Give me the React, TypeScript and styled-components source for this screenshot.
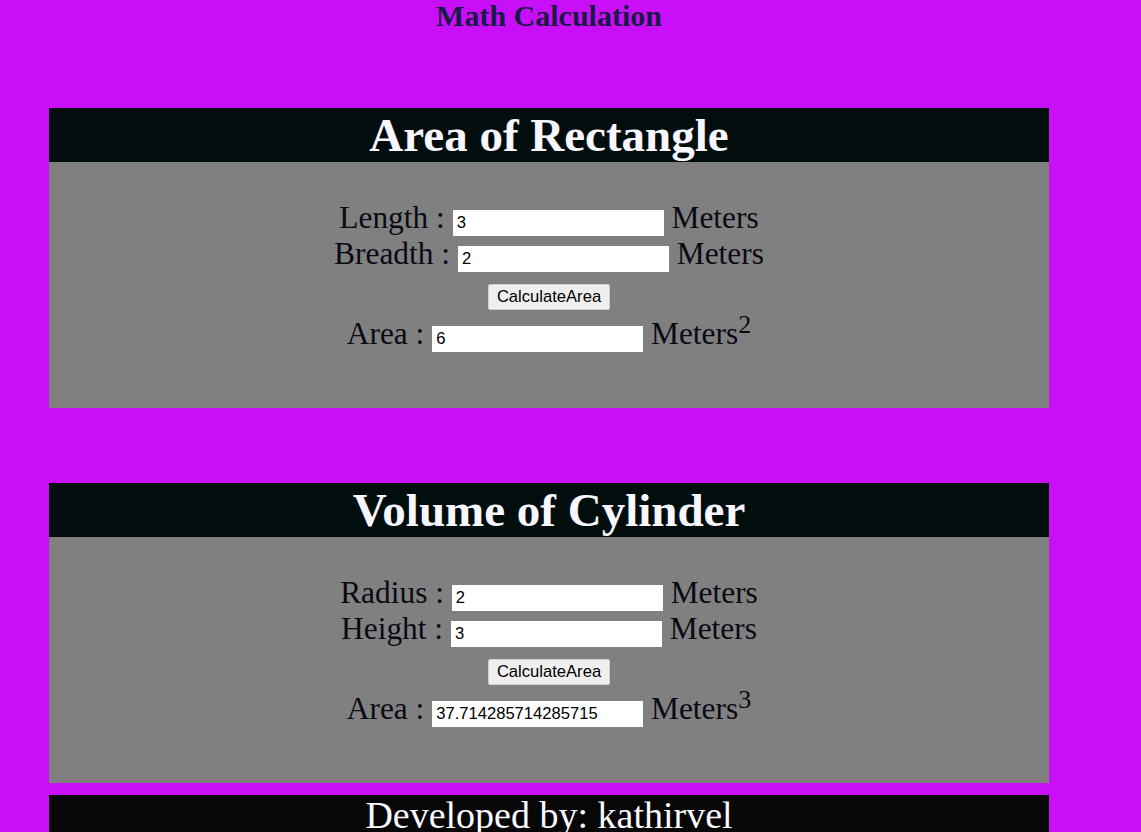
import React, { useState } from "react";
import styled, { createGlobalStyle } from "styled-components";

const GlobalStyle = createGlobalStyle`
  html, body {
    margin: 0;
    padding: 0;
    background: #c90ff8;
    font-family: "Liberation Serif", "Times New Roman", serif;
  }
`;

const Page = styled.div`
  display: flex;
  flex-direction: column;
  width: 1000px;
  padding-left: 49px;
`;

const Title = styled.div`
  font-family: "Liberation Serif", "Times New Roman", serif;
  font-weight: bold;
  font-size: 30px;
  line-height: 32px;
  height: 32px;
  text-align: center;
  color: #1a1a48;
`;

const Panel = styled.section<{ $top: number }>`
  display: flex;
  flex-direction: column;
  margin-top: ${(p) => p.$top}px;
`;

const PanelHeader = styled.div`
  height: 54px;
  background: #020e0e;
  color: #f8f6ff;
  font-weight: bold;
  font-size: 47px;
  line-height: 54px;
  text-align: center;
`;

const PanelBody = styled.div`
  box-sizing: border-box;
  height: 246px;
  padding-top: 38px;
  background: #808080;
  color: #0a0a14;
  font-size: 31.4px;
`;

const Row = styled.div`
  height: 36px;
  line-height: 36px;
  text-align: center;
  white-space: nowrap;
`;

const ButtonRow = styled.div`
  box-sizing: border-box;
  height: 44px;
  padding-top: 12px;
  display: flex;
  justify-content: center;
  align-items: flex-start;
`;

const Field = styled.input`
  box-sizing: border-box;
  width: 211px;
  height: 26px;
  border: none;
  padding: 0 4px;
  margin: 0;
  background: #ffffff;
  color: #000;
  font-family: "Liberation Sans", Arial, sans-serif;
  font-size: 16.6px;
  outline: none;
`;

const CalcButton = styled.button`
  box-sizing: border-box;
  width: 122px;
  height: 26px;
  padding: 0 6px;
  background: #efefef;
  border: 1px solid #cfcfcf;
  border-radius: 2px;
  color: #000;
  font-family: "Liberation Sans", Arial, sans-serif;
  font-size: 16.6px;
  cursor: pointer;
`;

const Sup = styled.sup`
  font-size: 0.83em;
  line-height: 0;
`;

const Footer = styled.footer`
  margin-top: 12px;
  background: #070707;
  color: #fafaff;
  font-size: 38px;
  line-height: 40px;
  padding-bottom: 10px;
  text-align: center;
`;

export default function App() {
  const [length, setLength] = useState("3");
  const [breadth, setBreadth] = useState("2");
  const [area, setArea] = useState("6");
  const [radius, setRadius] = useState("2");
  const [height, setHeight] = useState("3");
  const [volume, setVolume] = useState("37.714285714285715");

  return (
    <>
      <GlobalStyle />
      <Page>
        <Title>Math Calculation</Title>

        <Panel $top={76}>
          <PanelHeader>Area of Rectangle</PanelHeader>
          <PanelBody>
            <Row>
              Length : <Field value={length} onChange={(e) => setLength(e.target.value)} /> Meters
            </Row>
            <Row>
              Breadth : <Field value={breadth} onChange={(e) => setBreadth(e.target.value)} /> Meters
            </Row>
            <ButtonRow>
              <CalcButton onClick={() => setArea(String(Number(length) * Number(breadth)))}>
                CalculateArea
              </CalcButton>
            </ButtonRow>
            <Row>
              Area : <Field value={area} readOnly /> Meters<Sup>2</Sup>
            </Row>
          </PanelBody>
        </Panel>

        <Panel $top={75}>
          <PanelHeader>Volume of Cylinder</PanelHeader>
          <PanelBody>
            <Row>
              Radius : <Field value={radius} onChange={(e) => setRadius(e.target.value)} /> Meters
            </Row>
            <Row>
              Height : <Field value={height} onChange={(e) => setHeight(e.target.value)} /> Meters
            </Row>
            <ButtonRow>
              <CalcButton
                onClick={() =>
                  setVolume(String((22 / 7) * Number(radius) * Number(radius) * Number(height)))
                }
              >
                CalculateArea
              </CalcButton>
            </ButtonRow>
            <Row>
              Area : <Field value={volume} readOnly /> Meters<Sup>3</Sup>
            </Row>
          </PanelBody>
        </Panel>

        <Footer>Developed by: kathirvel</Footer>
      </Page>
    </>
  );
}
